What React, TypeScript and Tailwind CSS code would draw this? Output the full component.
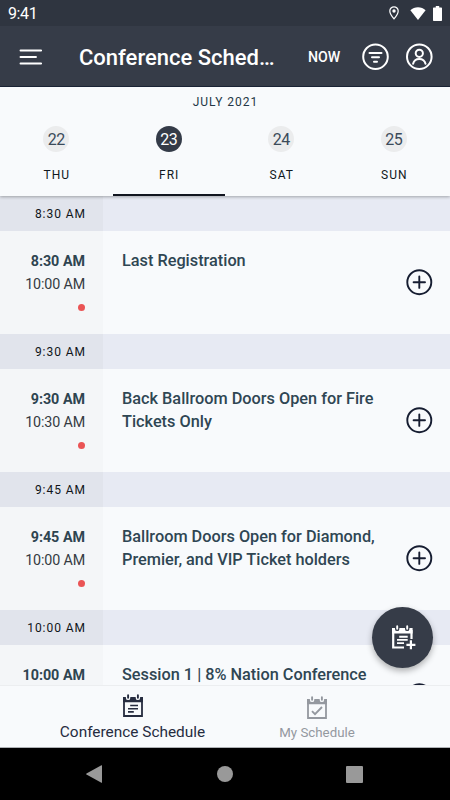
type Day = { date: number; name: string; active?: boolean }
type Session = { start: string; end?: string; title: string[] }

const DAYS: Day[] = [
  { date: 22, name: 'THU' },
  { date: 23, name: 'FRI', active: true },
  { date: 24, name: 'SAT' },
  { date: 25, name: 'SUN' },
]

const SESSIONS: Session[] = [
  { start: '8:30 AM', end: '10:00 AM', title: ['Last Registration'] },
  { start: '9:30 AM', end: '10:30 AM', title: ['Back Ballroom Doors Open for Fire', 'Tickets Only'] },
  { start: '9:45 AM', end: '10:00 AM', title: ['Ballroom Doors Open for Diamond,', 'Premier, and VIP Ticket holders'] },
  { start: '10:00 AM', title: ['Session 1 | 8% Nation Conference'] },
]

function StatusBar() {
  return (
    <div className="flex h-[26px] shrink-0 items-center justify-between bg-[#2f3540] pl-[8px] pr-[8px] text-white">
      <span className="pt-[2px] text-[16px] leading-none tracking-[-0.4px]">9:41</span>
      <div className="flex items-center">
        <svg className="mr-[11px] h-[14px] w-[10px]" viewBox="0 0 10 14" fill="none">
          <path d="M5 .8a4.2 4.2 0 0 0-4.2 4.2C.8 8 5 12.9 5 12.9S9.2 8 9.2 5A4.2 4.2 0 0 0 5 .8Z" stroke="white" strokeWidth="1.2" />
          <circle cx="5" cy="5" r="1.7" fill="white" />
        </svg>
        <svg className="mr-[7px] h-[13px] w-[16px]" viewBox="0 0 17 14" fill="white">
          <path d="M8.5 14 .3 3.5C2.5 1.6 5.4.4 8.5.4s6 1.2 8.2 3.1Z" />
        </svg>
        <svg className="h-[15px] w-[9px]" viewBox="0 0 9 15" fill="white">
          <path d="M2.8 0h3.4v1.5h2.1q.7 0 .7.7v12.1q0 .7-.7.7H.7q-.7 0-.7-.7V2.2q0-.7.7-.7h2.1Z" />
        </svg>
      </div>
    </div>
  )
}

function AppBar() {
  return (
    <header className="flex h-[61px] shrink-0 items-center border-b border-[#1c2538] bg-[#363c48] pl-[18px] pr-[16px] pt-[2px] text-white">
      <svg className="h-[18px] w-[24px] shrink-0" viewBox="0 0 24 18" stroke="white" strokeWidth="1.9" strokeLinecap="round">
        <path d="M2.5 2.5h20.7M2.5 9h15.5M2.5 15.5h20.7" />
      </svg>
      <h1 className="ml-[37px] w-[197px] whitespace-nowrap text-[22px] font-medium">Conference Sched…</h1>
      <span className="ml-[32px] w-[33px] whitespace-nowrap pt-px text-[14.2px] font-medium">NOW</span>
      <svg className="ml-[20px] h-[28px] w-[28px] shrink-0" viewBox="-0.5 0 28 28" fill="none" stroke="white" strokeWidth="2">
        <circle cx="14" cy="13.7" r="12.3" />
        <path d="M8 10h12M10.5 14.3h7M12.5 18.7h3" strokeLinecap="round" />
      </svg>
      <svg className="ml-[16px] h-[28px] w-[28px] shrink-0" viewBox="-0.3 0 28 28" fill="none" stroke="white" strokeWidth="2">
        <circle cx="14" cy="13.7" r="12.3" />
        <circle cx="14" cy="10.3" r="3.6" />
        <path d="M7.8 20.8c.7-3.1 3-4.8 6.2-4.8s5.5 1.7 6.2 4.8" strokeLinecap="round" />
      </svg>
    </header>
  )
}

function DayPicker() {
  return (
    <div className="relative z-10 flex h-[109px] shrink-0 flex-col bg-[#f8fafc] shadow-[0_1px_3px_rgba(0,0,0,0.3)]">
      <div className="pl-px pt-[7px] text-center text-[12px] leading-[16px] tracking-[1px] text-[#243746]">JULY 2021</div>
      <div className="grid flex-1 grid-cols-4">
        {DAYS.map((day) => (
          <div
            key={day.name}
            className={`flex flex-col items-center border-b-2 pt-[16px] ${day.active ? 'border-[#11151f]' : 'border-transparent'}`}
          >
            <span
              className={`flex h-[26px] w-[26px] items-center justify-center rounded-full pt-px text-[16px] leading-none tracking-[-0.4px] ${
                day.active ? 'bg-[#343b48] text-white' : 'bg-[#ebeced] text-[#3b4b5a]'
              }`}
            >
              {day.date}
            </span>
            <span className="mt-[14px] pl-px text-[12px] leading-[18px] tracking-[1px] text-[#101820]">{day.name}</span>
          </div>
        ))}
      </div>
    </div>
  )
}

function AddButton() {
  return (
    <button type="button" aria-label="Add" className="mb-px h-[28px] w-[28px]">
      <svg viewBox="0 0 28 28" fill="none" stroke="#161d31" strokeWidth="1.9">
        <circle cx="14.3" cy="14.2" r="12" />
        <path d="M14.3 8.5v11.4M8.6 14.2h11.4" strokeLinecap="round" />
      </svg>
    </button>
  )
}

function SessionBlock({ session }: { session: Session }) {
  return (
    <section className="shrink-0">
      <div className="flex h-[35px] bg-[#e7eaf3]">
        <div className="w-[103px] bg-[#e1e4ec] pr-[17px] text-right text-[12px] leading-[37px] tracking-[0.95px] text-[#101419]">
          {session.start}
        </div>
      </div>
      <div className="flex h-[103px] bg-[#f8fafc]">
        <div className="flex w-[103px] flex-col items-end bg-[#f4f6f8] pr-[18px] pt-[18px] text-[#2e4450]">
          <span className="text-[14.3px] font-bold leading-[24px]">{session.start}</span>
          {session.end && (
            <>
              <span className="text-[14.3px] leading-[23px] tracking-[-0.15px] text-[#343b42]">{session.end}</span>
              <span className="mt-[8px] h-[7px] w-[7px] rounded-full bg-[#ea5455]" />
            </>
          )}
        </div>
        <div className="flex-1 whitespace-nowrap pl-[19px] pt-[18px] text-[16.3px] font-medium leading-[23.5px] text-[#2f4653]">
          {session.title.map((line) => (
            <div key={line} className="h-[23px]">{line}</div>
          ))}
        </div>
        <div className="flex w-[45px] items-center">
          <AddButton />
        </div>
      </div>
    </section>
  )
}

// Calendar page with two binder rings, shared by both bottom tabs
function CalendarIcon({ lines }: { lines: boolean }) {
  return (
    <svg className="h-[24px] w-[20px]" viewBox="0 0 20 24" fill="none">
      <path d="M1 5v17h18V5" stroke="currentColor" strokeWidth="1.8" />
      <path d="M0 3h2.9v.9a2.2 2.2 0 0 0 4.4 0V3h5.4v.9a2.2 2.2 0 0 0 4.4 0V3H20v5.2H0Z" fill="currentColor" />
      <path d="M5.1 1.2v2.6M14.9 1.2v2.6" stroke="currentColor" strokeWidth="1.9" strokeLinecap="round" />
      {lines ? (
        <path d="M7.2 11.5h7.8M5 14.7h10M5 17.9h5.8" stroke="currentColor" strokeWidth="1.6" />
      ) : (
        <path d="m5 15.2 3 3L15 11" stroke="currentColor" strokeWidth="1.9" />
      )}
    </svg>
  )
}

function BottomTabs() {
  return (
    <nav className="relative flex h-[63px] shrink-0 border-b border-t border-b-[#aeb1b5] border-t-[#eceef0] bg-[#f8fafc]">
      <div className="ml-[40px] flex w-[185px] flex-col items-center pt-[8px] text-[#262c3f]">
        <CalendarIcon lines />
        <span className="mt-[5px] text-[15.4px] leading-[18px]">Conference Schedule</span>
      </div>
      <div className="flex w-[184px] flex-col items-center pt-[10px] text-[#94989f]">
        <CalendarIcon lines={false} />
        <span className="mt-[4px] text-[13.3px] leading-[17px]">My Schedule</span>
      </div>
      <button
        type="button"
        aria-label="Add session"
        className="absolute -top-[79px] right-[17.5px] flex h-[61px] w-[61px] items-center justify-center rounded-full bg-[#363c48] pl-[3px] text-white shadow-[0_3px_6px_rgba(0,0,0,0.3)]"
      >
        <svg className="h-[25px] w-[24px]" viewBox="0 0 24 25" fill="none">
          <path d="M19.5 14V5M1.2 5v17.5H12" stroke="currentColor" strokeWidth="2.2" />
          <path d="M0 3h3v.9a2.2 2.2 0 0 0 4.4 0V3h5.6v.9a2.2 2.2 0 0 0 4.4 0V3h3.2v5.500H0Z" fill="currentColor" />
          <path d="M5.2 1.2v2.6M15.2 1.2v2.6" stroke="currentColor" strokeWidth="1.9" strokeLinecap="round" />
          <path d="M7.2 11.7h8.5M5 14.9h10.7M5 18.1h7" stroke="currentColor" strokeWidth="1.9" />
          <path d="M18.9 15.3v9M14.4 19.8h9" stroke="currentColor" strokeWidth="2.2" />
        </svg>
      </button>
    </nav>
  )
}

function SystemNav() {
  return (
    <div className="flex h-[52px] shrink-0 items-center justify-between bg-black pl-[86px] pr-[87px] text-[#999]">
      <svg className="h-[18px] w-[16px]" viewBox="0 0 16 18" fill="currentColor">
        <path d="M15.4.3q.6-.3.6.5v16.4q0 .8-.6.5L.5 9.500q-.6-.5 0-1Z" />
      </svg>
      <span className="ml-px h-[16px] w-[16px] rounded-full bg-[#999]" />
      <span className="h-[17px] w-[17px] rounded-[1px] bg-[#999]" />
    </div>
  )
}

export default function App() {
  return (
    <div className="flex h-[800px] w-[450px] flex-col overflow-hidden bg-[#f8fafc] font-['Roboto',sans-serif]">
      <StatusBar />
      <AppBar />
      <DayPicker />
      <main className="min-h-0 flex-1 overflow-hidden">
        {SESSIONS.map((session) => (
          <SessionBlock key={session.start} session={session} />
        ))}
      </main>
      <BottomTabs />
      <SystemNav />
    </div>
  )
}
